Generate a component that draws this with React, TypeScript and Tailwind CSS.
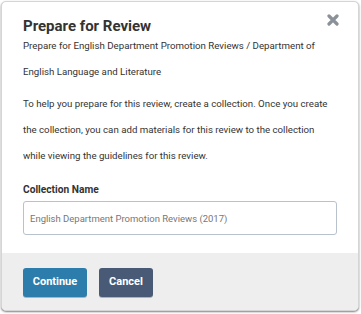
export default function App() {
  return (
    <div className="w-[361px] h-[314px] bg-white pt-px pl-px font-['Roboto',sans-serif]">
      <div className="flex flex-col w-[358px] h-[310px] rounded-[5px] border border-[#d5d5d5] bg-white shadow-[0_1px_2px_rgba(0,0,0,0.5)] overflow-hidden">
        <div className="relative px-[21px] pt-[13px] flex-1">
          <h1 className="text-[15px] font-bold text-[#333] leading-[22px]">Prepare for Review</h1>
          <button className="absolute left-[325px] top-[12px] text-[#8b9198]">
            <svg width="12" height="12" viewBox="0 0 12 12">
              <path d="M2 2 L10 10 M10 2 L2 10" stroke="currentColor" strokeWidth="3.2" strokeLinecap="round" />
            </svg>
          </button>
          <p className="-mt-[4px] text-[9.7px] leading-[26px] text-[#333]">
            Prepare for English Department Promotion Reviews / Department of English Language and Literature
          </p>
          <p className="mt-[6px] text-[9.7px] leading-[26px] text-[#333]">
            To help you prepare for this review, create a collection. Once you create the collection, you can add materials for this review to the collection while viewing the guidelines for this review.
          </p>
          <label className="block mt-[13px] text-[10.2px] font-bold text-[#333] leading-[16px]">Collection Name</label>
          <input
            className="block mt-[3px] w-[314px] h-[34px] border border-[#b8c2cc] rounded-[3px] px-[6px] text-[9.5px] text-[#777] outline-none"
            defaultValue="English Department Promotion Reviews (2017)"
          />
        </div>
        <div className="h-[57px] shrink-0 bg-[#eeeeee] flex items-start gap-[12px] px-[21px] pt-[15px]">
          <button className="h-[29px] w-[64px] rounded-[3px] bg-[#2c7cac] text-white text-[11px] font-bold shadow-[0_1px_0_rgba(0,0,0,0.25)]">Continue</button>
          <button className="h-[29px] w-[54px] rounded-[3px] bg-[#485a76] text-white text-[11px] font-bold shadow-[0_1px_0_rgba(0,0,0,0.25)]">Cancel</button>
        </div>
      </div>
    </div>
  );
}
